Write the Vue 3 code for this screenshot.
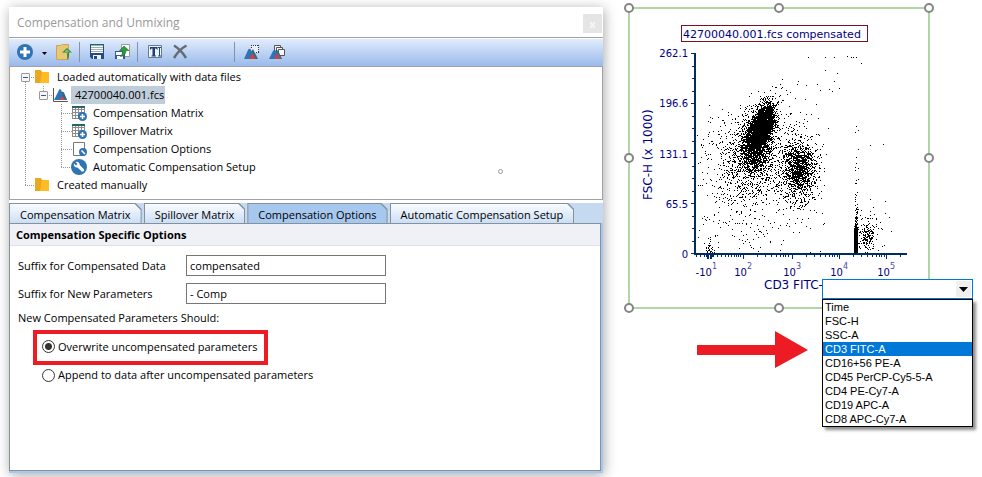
<template>
  <div class="page">
    <section class="window">
      <header class="title-bar">
        <h1>Compensation and Unmixing</h1>
        <button class="close" type="button" aria-label="Close">x</button>
      </header>

      <div class="toolbar">
        <button type="button" aria-label="Add">
          <svg width="16" height="16" viewBox="0 0 16 16">
            <circle cx="8" cy="8" r="8" fill="#2f74b5" />
            <path d="M8 3v10M3 8h10" stroke="#fff" stroke-width="3" />
          </svg>
        </button>
        <button type="button" aria-label="Add menu">
          <svg width="5" height="16" viewBox="0 0 5 16"><path d="M0 8h5L2.500 11z" fill="#000" /></svg>
        </button>
        <button type="button" aria-label="Load">
          <svg width="16" height="16" viewBox="0 0 16 16">
            <path d="M.5 1.500h4l2-1h6v15H.5z" fill="#e6c878" stroke="#d0a54a" />
            <path d="M11 4l5 4.500h-3c.2 3 .2 5.500-2 7.500 .3-2.500.2-4.500-.3-7.500H6z" fill="#3f8a3a" />
            <path d="M11 5.500l2.500 2.200H12V11c-.3-1-.3-2-.6-3.300H8.500z" fill="#8cc878" />
          </svg>
        </button>
        <span class="sep"></span>
        <button type="button" aria-label="Save">
          <svg width="16" height="16" viewBox="0 0 16 16">
            <path d="M1 0h14v15H3l-2-2z" fill="#234a82" />
            <path d="M2 1h12v8H2z" fill="#fff" />
            <path d="M1 0h14v1.500H1z" fill="#1f6b66" />
            <path d="M2 3.500h12M2 5.500h12M2 7.500h12" stroke="#a5aab4" />
            <path d="M4 11h8v4H4z" fill="#eef1f6" />
            <path d="M5 12h3v3H5z" fill="#234a82" />
          </svg>
        </button>
        <button type="button" aria-label="Export">
          <svg width="16" height="16" viewBox="0 0 16 16">
            <path d="M7.500.5h8v12h-8z" fill="#fff" stroke="#9a9a9a" />
            <path d="M1 7h10v8H1z" fill="#315b91" />
            <path d="M2 8h6v3H2zM3 12h6v3H3z" fill="#fff" />
            <path d="M10 2l5 4.500h-3c0 3-1.500 5.500-5.500 6 1.800-1.700 2.300-3.500 2-6H5.500z" fill="#2e9c3c" stroke="#226a2d" stroke-width=".6" />
          </svg>
        </button>
        <span class="sep"></span>
        <button type="button" aria-label="Rename">
          <svg width="16" height="16" viewBox="0 0 16 16">
            <path d="M1.500 1.500h13v12h-13z" fill="#edf3fc" stroke="#68788d" />
            <path d="M3 3h7.500v3l-1.500-1.500H8v7h1v1H4.500v-1h1v-7h-1L3 6z" fill="#20406d" />
            <path d="M11 3.500h3M12.500 3.500v8.500M11 12h3" stroke="#234a82" fill="none" />
          </svg>
        </button>
        <button type="button" aria-label="Delete">
          <svg width="16" height="16" viewBox="0 0 16 16">
            <path d="M2 1.500C6 4 11 9 14 14M14.500 1.500C9 4.500 5 9 2 14" fill="none" stroke="#656b75" stroke-width="2.500" />
          </svg>
        </button>
        <span class="sep wide"></span>
        <button type="button" aria-label="Select plot">
          <svg width="16" height="16" viewBox="0 0 16 16">
            <path d="M7 1h8v8H7z" fill="#eaf0fa" />
            <path d="M7 1.500h8M14.500 1v8M7.500 1v4M12 8.500h3" fill="none" stroke="#333" stroke-dasharray="1 1" />
            <path d="M6 9l3-4 5 10H6z" fill="#2f6f80" />
            <path d="M0 15L4 6q1.500-2.500 3 0l4 9z" fill="#2f74b5" />
            <path d="M5 15l3.500-6 3.500 6z" fill="#c1444b" />
          </svg>
        </button>
        <button type="button" aria-label="Select all plots">
          <svg width="16" height="16" viewBox="0 0 16 16">
            <path d="M5.500 1.500h6v6h-6z" fill="#f4f4f4" stroke="#555" />
            <path d="M7.500 3.500h6v6h-6z" fill="#f4f4f4" stroke="#555" />
            <path d="M9.500 5.500h6v6h-6z" fill="#fff" stroke="#555" />
            <path d="M6 9l3-3 4 9H6z" fill="#2f6f80" />
            <path d="M0 15L4 7q1.500-2.500 3 0l4 8z" fill="#2f74b5" />
            <path d="M5 15l3.500-6 3.500 6z" fill="#c1444b" />
          </svg>
        </button>
      </div>

      <div class="tree-pane">
        <ul class="tree">
          <li>
            <div class="row">
              <button class="toggle" type="button" aria-label="Collapse"></button>
              <svg class="icon" viewBox="0 0 16 16">
                <path d="M0 1h6l1 2h7v11H0z" fill="#e9a820" /><path d="M7 3h7v11H5z" fill="#fdbb25" />
              </svg>
              <span class="label">Loaded automatically with data files</span>
            </div>
            <ul>
              <li class="file">
                <div class="row">
                  <button class="toggle" type="button" aria-label="Collapse"></button>
                  <svg class="icon" viewBox="0 0 16 16">
                    <path d="M1 13L6 3q1-2 2 0l1 2q1-1 2 1l3 7z" fill="#2f74b5" />
                    <path d="M9 5q1-1 2 1l3 7H9z" fill="#2f6f80" />
                    <path d="M7 13l2-4 3 4z" fill="#dc4550" />
                    <path d="M.5 1v13.500H15" fill="none" stroke="#555" />
                  </svg>
                  <span class="label selected">42700040.001.fcs</span>
                </div>
                <ul>
                  <li v-for="item in fileItems" :key="item.label">
                    <div class="row">
                      <svg class="icon" viewBox="0 0 16 16">
                        <g v-if="item.icon === 'matrix'">
                          <path d="M1 1h13v13H1z" fill="#fff" />
                          <path d="M1.500 2v12M4.500 2v12M7.500 2v12M10.500 2v12M13.500 2v12M1 4.500h13M1 7.500h13M1 10.500h13M1 13.500h13" stroke="#8c8c8c" />
                          <path d="M1 1h13v2H1z" fill="#2c6466" />
                          <circle cx="11.500" cy="11.500" r="4.500" fill="#2f74b5" />
                          <path d="M11.500 9v5M9 11.500h5" stroke="#fff" stroke-width="1.500" />
                        </g>
                        <g v-else-if="item.icon === 'options'">
                          <path d="M2.500 1.500h11v13h-11z" fill="#fff" stroke="#777" />
                          <circle cx="12" cy="11" r="4" fill="#2f74b5" />
                          <path d="M10.500 9.500l3.500 3.500" stroke="#fff" stroke-width="1.500" />
                        </g>
                        <g v-else>
                          <circle cx="8" cy="8" r="8" fill="#2f74b5" />
                          <path d="M3 4.500l2 2 1.500-1.500-2-2c2-1 4.500.5 4.200 3l4.200 4.200c1 1.500-.8 3-2.200 2.200L6.500 8.500C4 9 2.300 6.700 3 4.500z" fill="#fff" />
                        </g>
                      </svg>
                      <span class="label">{{ item.label }}</span>
                    </div>
                  </li>
                </ul>
              </li>
            </ul>
          </li>
          <li>
            <div class="row">
              <svg class="icon" viewBox="0 0 16 16">
                <path d="M0 1h6l1 2h7v11H0z" fill="#e9a820" /><path d="M7 3h7v11H5z" fill="#fdbb25" />
              </svg>
              <span class="label">Created manually</span>
            </div>
          </li>
        </ul>
        <span class="pointer-dot"></span>
      </div>

      <nav class="tabs" role="tablist">
        <button
          v-for="tab in tabs"
          :key="tab"
          type="button"
          role="tab"
          :class="['tab', { active: tab === activeTab }]"
          :aria-selected="tab === activeTab"
          @click="activeTab = tab"
        >
          <span>{{ tab }}</span>
        </button>
      </nav>

      <div class="tab-frame">
        <form class="options" @submit.prevent>
          <h2>Compensation Specific Options</h2>
          <div class="fields">
            <label for="suffix-data">Suffix for Compensated Data</label>
            <input id="suffix-data" v-model="suffixData" type="text" />
            <label for="suffix-params">Suffix for New Parameters</label>
            <input id="suffix-params" v-model="suffixParams" type="text" />
          </div>
          <p>New Compensated Parameters Should:</p>
          <label class="choice highlighted">
            <input v-model="mode" type="radio" name="mode" value="overwrite" />
            <span>Overwrite uncompensated parameters</span>
          </label>
          <label class="choice">
            <input v-model="mode" type="radio" name="mode" value="append" />
            <span>Append to data after uncompensated parameters</span>
          </label>
        </form>
      </div>
    </section>

    <section class="plot">
      <svg class="chart" width="300" height="300" viewBox="0 0 300 300">
        <rect x="0" y="0" width="300" height="300" fill="#fff" stroke="#b1d6a5" stroke-width="2" />
        <rect x="52.500" y="17.500" width="186" height="16" fill="#fff" stroke="#7a1022" />
        <text x="54" y="30" class="chart-title">42700040.001.fcs compensated</text>

        <g shape-rendering="crispEdges">
          <path :d="dots" fill="#000" />
          <path d="M65 45h2v200h211v2H65z" fill="#002b63" />
          <path :d="ticks" stroke="#002b63" />
        </g>

        <text v-for="t in yLabels" :key="t.text" :x="59" :y="t.y + 4" class="tick" text-anchor="end">{{ t.text }}</text>
        <text v-for="t in xLabels" :key="t.exp + t.base" :x="t.x" y="268" class="tick" text-anchor="end">
          {{ t.base }}<tspan class="exp" dy="-7">{{ t.exp }}</tspan>
        </text>
        <text x="135" y="281" class="axis">CD3 FITC-A</text>
        <text transform="translate(23 192) rotate(-90)" class="axis">FSC-H (x 1000)</text>

        <circle v-for="h in handles" :key="h.join()" :cx="h[0]" :cy="h[1]" r="4" fill="#fff" stroke="#858585" stroke-width="2" />
      </svg>

      <div class="picker">
        <select v-model="picked" aria-label="X axis parameter">
          <option value=""></option>
          <option v-for="p in parameters" :key="p">{{ p }}</option>
        </select>
        <svg class="picker-arrow" width="15" height="16" viewBox="0 0 15 16">
          <path d="M0 0h15v16H0z" fill="#f0f0f0" /><path d="M3 6h9l-4.500 5z" fill="#000" />
        </svg>
        <ul role="listbox">
          <li v-for="p in parameters" :key="p" role="option" :class="{ current: p === hovered }" @mouseenter="hovered = p">{{ p }}</li>
        </ul>
      </div>

      <svg class="arrow" width="111" height="38" viewBox="0 0 111 38">
        <path d="M0 14h78V0l33 19-33 18V24H0z" fill="#ed1c24" />
      </svg>
    </section>
  </div>
</template>

<script setup>
import { ref } from 'vue';

const tabs = ['Compensation Matrix', 'Spillover Matrix', 'Compensation Options', 'Automatic Compensation Setup'];
const activeTab = ref('Compensation Options');

const fileItems = [
  { label: 'Compensation Matrix', icon: 'matrix' },
  { label: 'Spillover Matrix', icon: 'matrix' },
  { label: 'Compensation Options', icon: 'options' },
  { label: 'Automatic Compensation Setup', icon: 'setup' },
];

const suffixData = ref('compensated');
const suffixParams = ref('- Comp');
const mode = ref('overwrite');

const parameters = [
  'Time',
  'FSC-H',
  'SSC-A',
  'CD3 FITC-A',
  'CD16+56 PE-A',
  'CD45 PerCP-Cy5-5-A',
  'CD4 PE-Cy7-A',
  'CD19 APC-A',
  'CD8 APC-Cy7-A',
];
const picked = ref('');
const hovered = ref('CD3 FITC-A');

const yLabels = [
  { text: '262.1', y: 45 },
  { text: '196.6', y: 95 },
  { text: '131.1', y: 146 },
  { text: '65.5', y: 196 },
  { text: '0', y: 246 },
];
const xLabels = [
  { base: '-10', exp: '1', x: 88 },
  { base: '10', exp: '2', x: 123 },
  { base: '10', exp: '3', x: 172 },
  { base: '10', exp: '4', x: 219 },
  { base: '10', exp: '5', x: 266 },
];
const handles = [[0, 0], [150, 0], [300, 0], [0, 150], [300, 150], [0, 300], [150, 300], [300, 300]];

// axis ticks, the x axis is logarithmic above 10^2
let ticks = '';
for (let i = 0; i <= 16; i++) {
  const y = Math.round(45 + i * 12.5) + 0.5;
  ticks += i % 4 === 0 ? `M62 ${y}h3` : `M63 ${y}h2`;
}
const decades = [114, 163, 210, 257];
decades.forEach((x) => {
  ticks += `M${x + 0.5} 247v4`;
  for (let n = 2; n < 10; n++) {
    const mx = Math.round(x + 47 * Math.log10(n));
    if (mx < 278) ticks += `M${mx + 0.5} 247v2`;
  }
});
[67, 71, 75, 77, 78, 79, 81, 82, 83, 84, 88, 92, 96, 99, 102, 105, 107, 109, 111].forEach((x) => {
  ticks += `M${x + 0.5} 247v${x > 77 && x < 83 ? 4 : 2}`;
});

// seeded generator so that the events stay in place between renders
let seed = 42700040;
const rand = () => {
  seed = (seed * 1664525 + 1013904223) % 4294967296;
  return (seed + 1) / 4294967297;
};
const gauss = () => Math.sqrt(-2 * Math.log(rand())) * Math.cos(2 * Math.PI * rand());

const events = new Set();
const addEvent = (x, y) => {
  if (x > 68 && x < 278 && y > 46 && y < 246) events.add(`${Math.round(x)} ${Math.round(y)}`);
};
const cluster = (n, cx, cy, sx, sy, slope = 0) => {
  for (let i = 0; i < n; i++) {
    const dy = gauss() * sy;
    addEvent(cx + gauss() * sx + dy * slope, cy + dy);
  }
};
cluster(3800, 132, 120, 5, 11, -0.3);
cluster(800, 125, 130, 9, 15, -0.3);
cluster(500, 127, 145, 7, 14);
cluster(900, 124, 151, 15, 24, -0.1);
cluster(230, 98, 155, 17, 25);
cluster(1150, 169, 161, 8, 14, 0.05);
cluster(480, 168, 164, 12, 22);
cluster(110, 115, 218, 28, 18);
cluster(40, 80, 243, 2, 5);
cluster(110, 227, 222, 1, 14);
cluster(110, 238, 230, 3, 5);
cluster(100, 239, 225, 6, 13);
for (let i = 0; i < 900; i++) addEvent(225 + Math.floor(rand() * 4), 220 + rand() * 26);
for (let i = 0; i < 22; i++) addEvent(226 + rand() * 3, 112 + rand() * 95);
for (let i = 0; i < 30; i++) addEvent(145 + rand() * 55, 75 + rand() * 60);
[
  [179, 49], [196, 49], [205, 49], [218, 48], [222, 49], [224, 49], [227, 49], [232, 55], [196, 62],
  [208, 65], [205, 73], [210, 80], [153, 71], [169, 73], [143, 78], [153, 79], [177, 77], [191, 82],
  [203, 83], [241, 137], [254, 136], [256, 193], [256, 205], [262, 223],
].forEach(([x, y]) => addEvent(x, y));
const dots = [...events].map((p) => `M${p}h1v1h-1z`).join('');
</script>

<style>
body {
  background: #fff;
}
</style>

<style scoped>
* {
  box-sizing: border-box;
}

button {
  padding: 0;
  border: 0;
  background: none;
  font: inherit;
  color: inherit;
}

svg {
  display: block;
}

ul {
  margin: 0;
  padding: 0;
  list-style: none;
}

.page {
  display: flex;
  gap: 26px;
  min-height: 100vh;
  padding: 7px 9px 4px;
  overflow: hidden;
  font-family: "Open Sans", "Noto Sans", sans-serif;
  font-size: 11px;
  color: #000;
}

.window {
  flex: 1;
  min-width: 0;
  display: flex;
  flex-direction: column;
  background: #fff;
  box-shadow: 1px 2px 12px rgba(0, 0, 0, 0.35);
}

.title-bar {
  display: flex;
  align-items: center;
  justify-content: space-between;
  height: 31px;
  padding: 0 1px 0 8px;
  border-bottom: 1px solid #a3a0a5;
}

.title-bar h1 {
  margin: 0;
  font-size: 12px;
  font-weight: normal;
  color: #999;
}

.close {
  width: 19px;
  height: 19px;
  margin-top: 2px;
  background: #e5e5e5;
  color: #f7f7f7;
  font-weight: bold;
  line-height: 17px;
}

.toolbar {
  display: flex;
  align-items: center;
  gap: 9px;
  height: 29px;
  padding: 0 8px 2px;
  border-top: 1px solid #fff;
  border-bottom: 1px solid #a3a0ad;
  background: linear-gradient(#e1ecfd, #9abaea);
}

.sep {
  width: 1px;
  height: 20px;
  margin-left: -2px;
  background: #8591a8;
}

.sep.wide {
  margin-left: 37px;
}

.tree-pane {
  position: relative;
  padding: 1px 0 5px;
  border: 1px solid #a3a0a8;
  border-top: 0;
}

.tree {
  padding-left: 11px;
}

.tree ul {
  padding-left: 18px;
}

.tree li {
  position: relative;
}

/* dotted connectors between siblings */
.tree li:not(:last-child)::before {
  content: "";
  position: absolute;
  left: 4px;
  top: 9px;
  bottom: -9px;
  border-left: 1px dotted #999;
}

.tree .file::before,
.tree .file li:first-child::before {
  content: "";
  position: absolute;
  left: 4px;
  top: 0;
  height: 9px;
  border-left: 1px dotted #999;
}

.tree .file li:first-child::before {
  height: auto;
}

.row {
  position: relative;
  display: flex;
  align-items: center;
  height: 18px;
  padding-left: 14px;
}

.row::before {
  content: "";
  position: absolute;
  left: 4px;
  top: 9px;
  width: 11px;
  border-top: 1px dotted #999;
}

.toggle {
  position: absolute;
  left: 0;
  top: 5px;
  width: 9px;
  height: 9px;
  border: 1px solid #999;
  border-radius: 1px;
  background: linear-gradient(#3f51a0, #3f51a0) center / 5px 1px no-repeat #f7f7f7;
}

.icon {
  position: relative;
  width: 16px;
  height: 16px;
  margin-right: 2px;
}

.label {
  padding: 0 4px;
  line-height: 18px;
  white-space: nowrap;
}

.label.selected {
  padding-right: 1px;
  background: #bfcddb;
}

.pointer-dot {
  position: absolute;
  left: 488px;
  top: 102px;
  width: 5px;
  height: 5px;
  border: 1px solid #999;
  border-radius: 50%;
}

.tabs {
  display: flex;
  gap: 2px;
  height: 20px;
  margin-top: 3px;
  background: #c5d9f1;
}

.tab {
  padding: 1px;
  background: #84939b;
  clip-path: polygon(0 0, calc(100% - 6px) 0, 100% 6px, 100% 100%, 0 100%);
}

.tab span {
  display: block;
  height: 19px;
  padding: 0 10px;
  background: linear-gradient(#fafcff, #cbdef5);
  clip-path: polygon(0 0, calc(100% - 6px) 0, 100% 6px, 100% 100%, 0 100%);
  line-height: 21px;
  white-space: nowrap;
}

.tab.active span {
  background: #a6c8ee;
}

.tab-frame {
  flex: 1;
  display: flex;
  padding: 0 2px 2px 0;
  background: #a6c8ee;
}

.options {
  flex: 1;
  border: 1px solid #84939b;
  background: #fff;
}

.options h2 {
  margin: 0 0 9px;
  padding-left: 6px;
  border-bottom: 1px solid #dfe0e4;
  background: #f0f1f6;
  font-size: 11px;
  font-weight: bold;
  line-height: 21px;
}

.fields {
  display: grid;
  grid-template-columns: 160px 200px;
  row-gap: 7px;
  column-gap: 8px;
  align-items: center;
  padding-left: 8px;
}

.fields label {
  padding-bottom: 1px;
}

.fields input {
  height: 21px;
  padding: 0 3px 1px;
  border: 1px solid #767676;
  background: #fff;
  font: inherit;
  color: inherit;
}

.options p {
  margin: 5px 0 3px;
  padding-left: 8px;
  line-height: 18px;
}

.choice {
  display: flex;
  align-items: center;
  gap: 3px;
  width: fit-content;
  margin-left: 23px;
  padding: 0 9px;
  line-height: 20px;
}

.choice.highlighted {
  height: 35px;
  padding: 0 7px 2px 5px;
  border: 4px solid #ed1c24;
}

.choice input {
  appearance: none;
  width: 13px;
  height: 13px;
  margin: 0;
  border: 1px solid #333;
  border-radius: 50%;
  background: #fff;
}

.choice input:checked {
  background: radial-gradient(circle, #333 0 3px, #fff 4px);
}

.plot {
  position: relative;
  flex: none;
  width: 344px;
}

.chart {
  margin-top: 1px;
  overflow: visible;
  font-family: "DejaVu Sans", Verdana, sans-serif;
  fill: #000080;
}

.chart-title {
  font-size: 11px;
}

.tick {
  font-size: 10px;
}

.exp {
  font-size: 8px;
  fill: #4a4aa8;
}

.axis {
  font-size: 12px;
}

/* open drop-down lying over the chart's corner */
.picker {
  position: absolute;
  top: 272px;
  right: 0;
  width: 151px;
  font-family: "Liberation Sans", Arial, sans-serif;
  font-size: 11px;
}

.picker select {
  display: block;
  appearance: none;
  width: 100%;
  height: 20px;
  border: 1px solid #0078d7;
  border-radius: 0;
  background: #fff;
  font: inherit;
}

.picker-arrow {
  position: absolute;
  top: 2px;
  right: 2px;
  pointer-events: none;
}

.picker ul {
  border: 1px solid #000;
  background: #fff;
  box-shadow: 3px 3px 3px rgba(0, 0, 0, 0.45);
}

.picker li {
  padding-left: 2px;
  line-height: 14px;
  white-space: nowrap;
}

.picker .current {
  background: #0078d7;
  color: #fff;
}

.arrow {
  margin: 23px 0 0 68px;
}
</style>
